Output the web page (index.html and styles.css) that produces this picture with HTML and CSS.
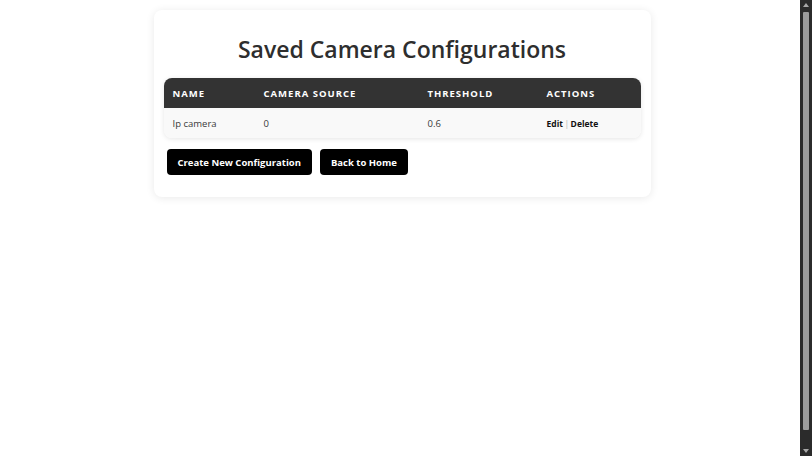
FILE: index.html
```html
<!DOCTYPE html>
<html lang="en">
<head>
<meta charset="utf-8">
<title>Saved Camera Configurations</title>
<link rel="stylesheet" href="styles.css">
</head>
<body>
<main class="page">
  <section class="card">
    <h1 class="title">Saved Camera Configurations</h1>
    <table class="config-table">
      <thead>
        <tr>
          <th class="col-name">Name</th>
          <th class="col-source">Camera Source</th>
          <th class="col-threshold">Threshold</th>
          <th class="col-actions">Actions</th>
        </tr>
      </thead>
      <tbody>
        <tr>
          <td>Ip camera</td>
          <td>0</td>
          <td>0.6</td>
          <td class="actions"><a href="#" class="action-link">Edit</a><span class="sep">|</span><a href="#" class="action-link">Delete</a></td>
        </tr>
      </tbody>
    </table>
    <div class="buttons">
      <a href="#" class="btn">Create New Configuration</a>
      <a href="#" class="btn">Back to Home</a>
    </div>
  </section>
</main>
<div class="scrollbar" aria-hidden="true">
  <span class="arrow arrow-up"></span>
  <span class="thumb"></span>
  <span class="arrow arrow-down"></span>
</div>
</body>
</html>
```

FILE: styles.css
```css
html, body {
  background: #ffffff;
}
body {
  margin: 0;
  min-height: 100vh;
  padding: 10px 0 14px;
  font-family: "Open Sans", "Liberation Sans", sans-serif;
  color: #333;
}
.page {
  display: flex;
  justify-content: center;
  padding-right: 8px;
}
.card {
  width: 497px;
  box-sizing: border-box;
  background: #fff;
  border-radius: 8px;
  box-shadow: 0 1px 8px rgba(0, 0, 0, 0.09);
  padding: 22px 10px 22px;
}
.title {
  margin: 0 0 12px;
  text-align: center;
  font-size: 23px;
  font-weight: 600;
  color: #2e2e2e;
  line-height: 34px;
}
.config-table {
  width: 100%;
  border-collapse: collapse;
  border-radius: 8px;
  overflow: hidden;
  box-shadow: 0 1px 5px rgba(0, 0, 0, 0.1);
}
.config-table th {
  background: #333;
  color: #fff;
  text-align: left;
  text-transform: uppercase;
  font-size: 9.5px;
  font-weight: 700;
  letter-spacing: 1px;
  height: 30px;
  padding: 0 9px;
}
.col-name { width: 73px; }
.col-source { width: 146px; }
.col-threshold { width: 101px; }
.config-table td {
  background: #f9f9f9;
  font-size: 9.5px;
  color: #3a3a3a;
  height: 30px;
  padding: 0 9px;
}
.config-table td.actions {
  font-weight: 700;
  font-size: 8.5px;
}
.action-link {
  color: #111;
  text-decoration: none;
}
.sep {
  color: #b5b5b5;
  font-weight: 400;
  margin: 0 1.5px;
}
.buttons {
  display: flex;
  gap: 8px;
  margin: 11px 0 0 3px;
}
.btn {
  display: inline-flex;
  align-items: center;
  height: 26px;
  padding: 0 11px;
  background: #000;
  color: #fff;
  font-size: 9.5px;
  font-weight: 700;
  text-decoration: none;
  border-radius: 4px;
}
.scrollbar {
  position: fixed;
  top: 0;
  right: 0;
  bottom: 0;
  width: 12px;
  background: #2b2b2b;
  display: flex;
  flex-direction: column;
  align-items: center;
  justify-content: space-between;
  padding: 3px 0;
  box-sizing: border-box;
}
.thumb {
  flex: 1;
  width: 6px;
  margin: 5px 0 19px;
  background: #9c9c9c;
  border-radius: 1px;
}
.arrow {
  width: 0;
  height: 0;
  border-left: 3px solid transparent;
  border-right: 3px solid transparent;
}
.arrow-up {
  border-bottom: 4px solid #a8a8a8;
}
.arrow-down {
  border-top: 4px solid #a8a8a8;
}
```
